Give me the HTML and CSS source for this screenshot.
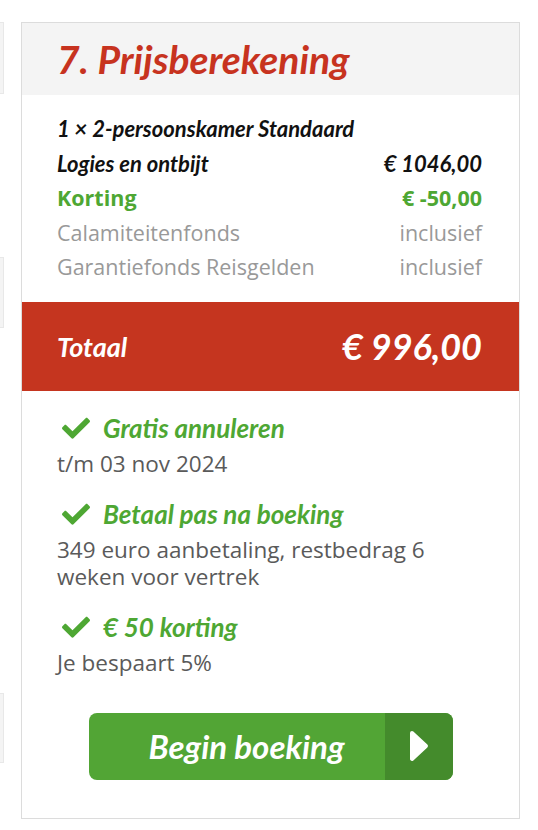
FILE: index.html
```html
<!DOCTYPE html>
<html lang="nl">
<head>
  <meta charset="UTF-8">
  <meta name="viewport" content="width=device-width, initial-scale=1.0">
  <title>Prijsberekening</title>
  <link rel="stylesheet" href="styles.css">
</head>
<body>
  <div class="page">
    <aside class="side">
      <div class="side-box side-box-1"></div>
      <div class="side-box side-box-2"></div>
      <div class="side-box side-box-3"></div>
    </aside>

    <section class="price-card">
      <header class="price-header">
        <h2>7. Prijsberekening</h2>
      </header>

      <div class="price-lines">
        <div class="line line-room">1 × 2-persoonskamer Standaard</div>
        <div class="line line-board">
          <span>Logies en ontbijt</span>
          <span>€ 1046,00</span>
        </div>
        <div class="line line-discount">
          <span>Korting</span>
          <span>€ -50,00</span>
        </div>
        <div class="line line-extra">
          <span>Calamiteitenfonds</span>
          <span>inclusief</span>
        </div>
        <div class="line line-extra">
          <span>Garantiefonds Reisgelden</span>
          <span>inclusief</span>
        </div>
      </div>

      <div class="price-total">
        <span class="total-label">Totaal</span>
        <span class="total-amount">€ 996,00</span>
      </div>

      <ul class="benefits">
        <li class="benefit">
          <div class="benefit-title">
            <svg class="check" viewBox="0 0 512 420"><path d="M173.9 407.4l-166.4-166.4c-10-10-10-26.2 0-36.2l36.2-36.2c10-10 26.2-10 36.2 0L192 280.7 432.1 40.6c10-10 26.2-10 36.2 0l36.2 36.2c10 10 10 26.2 0 36.2l-294.4 294.4c-10 10-26.2 10-36.2 0z"/></svg>
            Gratis annuleren
          </div>
          <div class="benefit-text">t/m 03 nov 2024</div>
        </li>
        <li class="benefit">
          <div class="benefit-title">
            <svg class="check" viewBox="0 0 512 420"><path d="M173.9 407.4l-166.4-166.4c-10-10-10-26.2 0-36.2l36.2-36.2c10-10 26.2-10 36.2 0L192 280.7 432.1 40.6c10-10 26.2-10 36.2 0l36.2 36.2c10 10 10 26.2 0 36.2l-294.4 294.4c-10 10-26.2 10-36.2 0z"/></svg>
            Betaal pas na boeking
          </div>
          <div class="benefit-text">349 euro aanbetaling, restbedrag 6 weken voor vertrek</div>
        </li>
        <li class="benefit">
          <div class="benefit-title">
            <svg class="check" viewBox="0 0 512 420"><path d="M173.9 407.4l-166.4-166.4c-10-10-10-26.2 0-36.2l36.2-36.2c10-10 26.2-10 36.2 0L192 280.7 432.1 40.6c10-10 26.2-10 36.2 0l36.2 36.2c10 10 10 26.2 0 36.2l-294.4 294.4c-10 10-26.2 10-36.2 0z"/></svg>
            € 50 korting
          </div>
          <div class="benefit-text">Je bespaart 5%</div>
        </li>
      </ul>

      <div class="actions">
        <a href="#" class="book-btn">
          <span class="book-label">Begin boeking</span>
          <span class="book-arrow">
            <svg viewBox="0 0 20 32"><polygon points="3,3 17,16 3,29"/></svg>
          </span>
        </a>
      </div>
    </section>
  </div>
</body>
</html>
```

FILE: styles.css
```css
* {
  margin: 0;
  padding: 0;
  box-sizing: border-box;
}

body {
  background-color: #fff;
  font-family: "Open Sans", Arial, sans-serif;
}

.page {
  display: flex;
  align-items: flex-start;
  gap: 17px;
  padding-top: 22px;
}

/* left column, mostly out of view */
.side {
  flex: 0 0 300px;
  margin-left: -296px;
}

.side-box {
  background-color: #f4f4f4;
  border: 1px solid #e8e8e8;
}

.side-box-1 {
  height: 72px;
}

.side-box-2 {
  height: 71px;
  margin-top: 163px;
}

.side-box-3 {
  height: 70px;
  margin-top: 365px;
}

.price-card {
  flex: 0 0 499px;
  border: 1px solid #dcdcdc;
  background-color: #fff;
}

.price-header {
  background-color: #f4f4f4;
  height: 72px;
  padding: 0 35px;
  display: flex;
  align-items: center;
}

.price-header h2 {
  font-family: Lato, "Open Sans", sans-serif;
  font-style: italic;
  font-weight: 700;
  font-size: 39px;
  color: #c7331f;
}

.price-lines {
  padding: 17px 37px 17px 35px;
}

.line {
  display: flex;
  justify-content: space-between;
  line-height: 34.5px;
}

.line-room,
.line-board {
  font-family: Lato, "Open Sans", sans-serif;
  font-style: italic;
  font-weight: 700;
  font-size: 22px;
  color: #111;
}

.line-discount {
  font-weight: 700;
  font-size: 21.5px;
  color: #4ea733;
}

.line-extra {
  font-size: 21.5px;
  color: #999;
}

.price-total {
  background-color: #c5351f;
  height: 89px;
  padding: 0 37px 0 35px;
  display: flex;
  justify-content: space-between;
  align-items: center;
  color: #fff;
  font-family: Lato, "Open Sans", sans-serif;
  font-style: italic;
  font-weight: 700;
}

.total-label {
  font-size: 27px;
}

.total-amount {
  font-size: 36px;
}

.benefits {
  list-style: none;
  padding: 22px 37px 0 35px;
}

.benefit + .benefit {
  margin-top: 22px;
}

.benefit-title {
  display: flex;
  align-items: center;
  line-height: 30px;
  font-family: Lato, "Open Sans", sans-serif;
  font-style: italic;
  font-weight: 700;
  font-size: 26px;
  color: #4ea733;
}

.check {
  width: 28px;
  height: 23px;
  margin-left: 5px;
  margin-right: 13px;
  fill: #4ea733;
}

.benefit-text {
  margin-top: 7px;
  font-size: 22.5px;
  line-height: 27px;
  color: #5a5a5a;
}

.actions {
  padding: 37px 0 38px;
  display: flex;
  justify-content: center;
}

.book-btn {
  display: flex;
  width: 364px;
  height: 67px;
  border-radius: 8px;
  overflow: hidden;
  text-decoration: none;
  background-color: #52a535;
}

.book-label {
  flex: 1;
  display: flex;
  align-items: center;
  justify-content: center;
  padding-left: 20px;
  font-family: Lato, "Open Sans", sans-serif;
  font-style: italic;
  font-weight: 700;
  font-size: 33px;
  color: #fff;
}

.book-arrow {
  width: 68px;
  display: flex;
  align-items: center;
  justify-content: center;
  background-color: #448b2c;
}

.book-arrow svg {
  width: 20px;
  height: 32px;
  fill: #fff;
  stroke: #fff;
  stroke-width: 4;
  stroke-linejoin: round;
}
```
